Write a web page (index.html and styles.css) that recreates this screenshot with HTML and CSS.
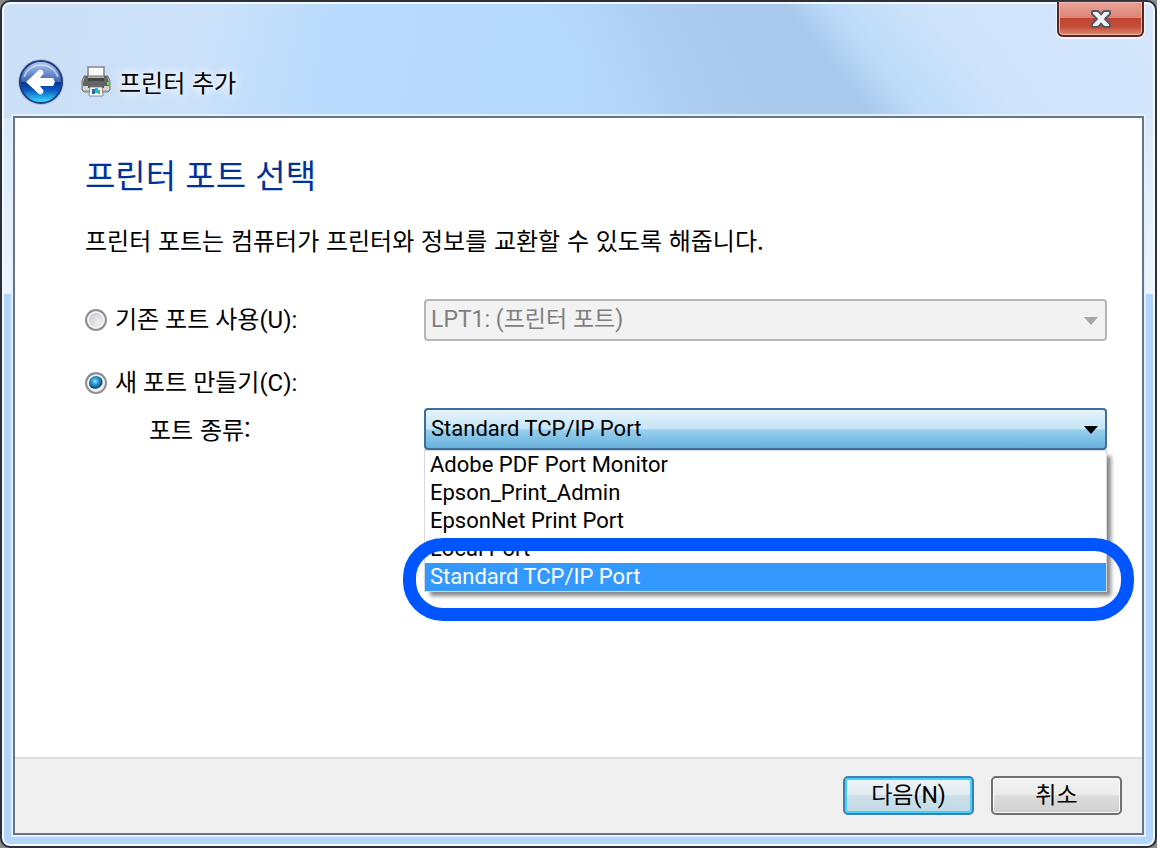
FILE: index.html
```html
<!DOCTYPE html>
<html lang="ko">
<head>
<meta charset="utf-8">
<meta name="viewport" content="width=device-width, initial-scale=1">
<title>프린터 추가</title>
<link rel="stylesheet" href="styles.css">
</head>
<body>
<form class="window">
  <header class="titlebar">
    <button class="close" type="button" aria-label="닫기">
      <svg width="22" height="18" viewBox="0 0 22 18" aria-hidden="true">
        <path d="M2 2Q2 1 3 1H7Q8 1 9 2L11 4.500 13 2Q14 1 15 1H19Q20 1 20 2V4L15 9 20 14V16Q20 17 19 17H15Q14 17 13 16L11 13.500 9 16Q8 17 7 17H3Q2 17 2 16V14L7 9 2 4Z" fill="#f4f4f4" stroke="#545766" stroke-width="2" stroke-linejoin="round"/>
      </svg>
    </button>
    <div class="caption">
      <button class="back" type="button" aria-label="뒤로">
        <svg width="48" height="48" viewBox="0 0 48 48" aria-hidden="true">
          <defs>
            <linearGradient id="orb" x1="0" y1="0" x2="0" y2="1">
              <stop offset="0" stop-color="#b9cdec"/>
              <stop offset=".22" stop-color="#7f9fd6"/>
              <stop offset=".49" stop-color="#3c63b4"/>
              <stop offset=".5" stop-color="#06328f"/>
              <stop offset=".7" stop-color="#0a5cc0"/>
              <stop offset=".95" stop-color="#35d2fb"/>
            </linearGradient>
          </defs>
          <circle cx="24" cy="24" r="23" fill="#8fa8c8" opacity=".5"/>
          <circle cx="24" cy="24" r="21" fill="url(#orb)" stroke="#1f3f80" stroke-width="2"/>
          <path d="M7 19A18 18 0 0 1 41 19" fill="none" stroke="#dce8f8" stroke-width="1.5" opacity=".7"/>
          <path d="M9.500 24L22 12.500Q26 11 26 15.500L22 20.500H36Q38.500 24 36 27.500H22L26 32.500Q26 37 22 35.500Z" fill="#fff" stroke="#fff" stroke-linejoin="round"/>
        </svg>
      </button>
      <svg class="printer" width="30" height="32" viewBox="0 0 30 32" aria-hidden="true">
        <path d="M7 1h16v11H7z" fill="#fafafa" stroke="#858585" stroke-width="1.500"/>
        <path d="M3 10h24l2 5v9l-2 2H3l-2-2v-9z" fill="#b5b5b3" stroke="#777"/>
        <path d="M4 10h3v2h16v-2h3l2 7v3H2v-3z" fill="#646464"/>
        <path d="M7 12h16v3H7z" fill="#444"/>
        <path d="M2 20h26v4H2z" fill="#d4d4d0"/>
        <path d="M27 16v3" stroke="#65db51" stroke-width="2"/>
        <path d="M7 20h16v2H7z" fill="#555"/>
        <path d="M9 21h12l1 9H8z" fill="#fff" stroke="#8b8b8b"/>
        <path d="M11 23h3v5h-3z" fill="#2467a5"/>
        <path d="M14 22h3v5h-3z" fill="#18bce0"/>
        <path d="M17 24h2v4h-2z" fill="#57b652"/>
      </svg>
      <span class="caption-text">프린터 추가</span>
    </div>
  </header>

  <div class="panel">
    <main class="content">
      <h1 class="heading">프린터 포트 선택</h1>
      <p class="intro">프린터 포트는 컴퓨터가 프린터와 정보를 교환할 수 있도록 해줍니다.</p>
      <div class="fields">
        <div class="choice">
          <input class="radio" type="radio" name="port" id="existing">
          <label for="existing">기존 포트 사용(U):</label>
        </div>
        <div class="combo">
          <select class="select" aria-label="기존 포트" disabled>
            <option>LPT1: (프린터 포트)</option>
          </select>
          <svg class="arrow" width="14" height="8" viewBox="0 0 14 8" aria-hidden="true"><path d="M0 0h14L7 8z" fill="#a6a6aa"/></svg>
        </div>
        <div class="choice choice-new">
          <input class="radio" type="radio" name="port" id="new" checked>
          <label for="new">새 포트 만들기(C):</label>
        </div>
        <label class="type-label" for="type">포트 종류:</label>
        <div class="combo">
          <select class="select select-open" id="type">
            <option>Standard TCP/IP Port</option>
          </select>
          <svg class="arrow" width="14" height="8" viewBox="0 0 14 8" aria-hidden="true"><path d="M0 0h14L7 8z" fill="#000"/></svg>
          <ul class="list" role="listbox" aria-label="포트 종류">
            <li class="item" role="option">Adobe PDF Port Monitor</li>
            <li class="item" role="option">Epson_Print_Admin</li>
            <li class="item" role="option">EpsonNet Print Port</li>
            <li class="item" role="option">Local Port</li>
            <li class="item item-selected" role="option" aria-selected="true">Standard TCP/IP Port<span class="ring"></span></li>
          </ul>
        </div>
      </div>
    </main>
    <footer class="footer">
      <button class="button button-default" type="button">다음(N)</button>
      <button class="button" type="button">취소</button>
    </footer>
  </div>
</form>
</body>
</html>
```

FILE: styles.css
```css
* { box-sizing: border-box; }

body {
  margin: 0;
  background: #8a8a8a;
  color: #000;
  font: 24px/28px Roboto, "Noto Sans CJK KR", sans-serif;
}

button, select {
  font: inherit;
  color: inherit;
  padding: 0;
}

.caption-text, .heading, .intro, .type-label {
  font-family: "Noto Sans CJK KR", sans-serif;
}

.window {
  min-height: 100vh;
  display: flex;
  flex-direction: column;
  padding: 0 11px 11px;
  border: 2px solid #2c303c;
  border-radius: 10px;
  background:
    linear-gradient(#d8e8fb, #edf5fe) left 116px / 11px 176px no-repeat,
    linear-gradient(#d8e8fb, #edf5fe) right 116px / 11px 176px no-repeat,
    linear-gradient(52deg, transparent 50%, #a9c9ec 66%, #a9c9ec 70%, #bddcf9 74%, #cfe3fb 82%, #d5e6fc 100%) top / 100% 116px no-repeat,
    linear-gradient(100deg, #cbdff6 0, #cce2fa 17%, #b7dafd 30%, #b5d9fd 50%, #accef1 65%) top / 100% 116px no-repeat,
    #b3d5f9;
  box-shadow: inset 0 0 0 2px #f3f9ff;
}

.titlebar {
  display: flex;
  flex-direction: column;
  height: 114px;
}

.close {
  align-self: flex-end;
  display: grid;
  place-items: center;
  width: 87px;
  height: 35px;
  border: 2px solid #5b2520;
  border-top: 0;
  border-radius: 0 0 6px 6px;
  background: linear-gradient(#e9a397, #dd8575 48%, #bf4531 50%, #c44f3a 75%, #dc8672);
  box-shadow: inset 0 0 0 1px #f0b3a7, 0 1px 1px 1px #edf5fe;
}

.caption {
  display: flex;
  align-items: center;
  gap: 16px;
  padding: 21px 4px 0;
}

.back {
  width: 48px;
  height: 48px;
  border: 0;
  border-radius: 50%;
  background: none;
}

.back svg, .printer { display: block; }

.caption-text {
  margin-left: -8px;
  text-shadow: 0 0 12px #fff, 0 0 8px #fff;
}

.panel {
  flex: 1;
  display: flex;
  flex-direction: column;
  border: 2px solid #667589;
  background: #fff;
  box-shadow: 0 0 0 2px #e3effd;
}

.content {
  flex: 1;
  padding: 36px 35px 0 70px;
}

.heading {
  margin: 0;
  color: #003399;
  font-size: 33px;
  font-weight: 400;
  line-height: 40px;
}

.intro {
  margin: 30px 0 43px;
  line-height: 32px;
}

.fields {
  display: grid;
  grid-template-columns: 339px 1fr;
  align-items: center;
}

.choice {
  display: flex;
  align-items: center;
  gap: 8px;
}

.choice-new {
  grid-column: 1 / -1;
  height: 44px;
  margin: 20px 0 3px;
}

.radio {
  appearance: none;
  width: 22px;
  height: 22px;
  margin: 0;
  border: 2px solid #8c8f94;
  border-radius: 50%;
  background: radial-gradient(circle at 65% 65%, #f0f0f0, #c9cdd0 70%);
  box-shadow: inset 0 0 0 2px #f4f4f4;
}

.radio:checked {
  background: radial-gradient(circle at 45% 40%, #9be4fb 0, #2aa0dc 22%, #124b78 48%, #f4f4f4 56%);
}

.type-label { padding-left: 64px; }

.combo { position: relative; }

.select {
  appearance: none;
  display: block;
  width: 100%;
  height: 42px;
  padding: 0 40px 0 5px;
  border: 2px solid #b3b6bc;
  border-radius: 4px;
  background: #f2f2f2;
  color: #808080;
  font-size: 23px;
  opacity: 1;
}

.select-open {
  border-color: #3b6f9c;
  background: linear-gradient(#e5f4fb, #c5e5f6 50%, #98d0ee 52%, #69b2dd);
  color: #000;
  font-size: 22px;
}

.arrow {
  position: absolute;
  top: 18px;
  right: 9px;
  pointer-events: none;
}

.list {
  position: absolute;
  top: 100%;
  left: 0;
  right: 0;
  margin: 0;
  padding: 0;
  list-style: none;
  border: 1px solid #d6d9df;
  background: #fff;
  box-shadow: 5px 5px 4px -1px #888;
  font-size: 22px;
}

.item {
  height: 28px;
  padding-left: 5px;
}

.item-selected {
  position: relative;
  background: #3399ff;
  color: #fff;
}

.ring {
  position: absolute;
  inset: -25px -28px -30px -22px;
  border: 13px solid #0055ff;
  border-radius: 40px;
  pointer-events: none;
}

.footer {
  display: flex;
  justify-content: flex-end;
  gap: 17px;
  padding: 17px 20px 18px;
  border-top: 2px solid #dfdfdf;
  background: #f0f0f0;
}

.button {
  width: 131px;
  height: 39px;
  border: 2px solid #707070;
  border-radius: 5px;
  background: linear-gradient(#f3f3f3, #ebebeb 48%, #dddddd 50%, #cfcfcf);
  box-shadow: inset 0 0 0 1px #fafafa;
  font-size: 23px;
}

.button-default {
  border-color: #3c7fb1;
  background: linear-gradient(#edf3f6, #e1ecf1 48%, #cee0e9 50%, #c1d9e5);
  box-shadow: inset 0 0 0 2px #43d0fa;
}
```
